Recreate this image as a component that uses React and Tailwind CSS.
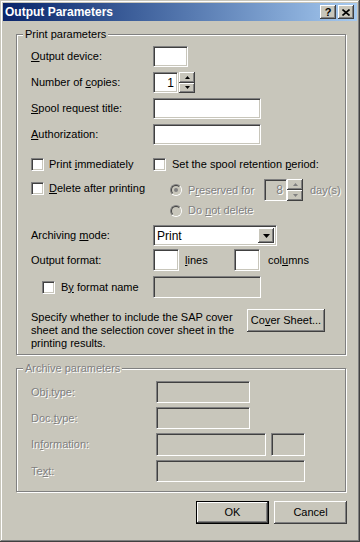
const sunken =
  "border border-[#808080] border-b-white border-r-white shadow-[inset_1px_1px_0_#404040,inset_-1px_-1px_0_#c8c6bb]";
const raised =
  "bg-[#c8c6bb] shadow-[inset_-1px_-1px_0_#404040,inset_1px_1px_0_#ffffff,inset_-2px_-2px_0_#808080,inset_2px_2px_0_#c8c6bb]";
const dis = "text-[#808080] [text-shadow:1px_1px_0_#ffffff]";

function U({ children }) {
  return <span className="underline underline-offset-[1px]">{children}</span>;
}

function Check() {
  return <div className={`w-[13px] h-[13px] shrink-0 bg-white ${sunken}`} />;
}

function Radio({ checked }) {
  return (
    <div className="w-[12px] h-[12px] shrink-0 rounded-full border border-[#808080] border-b-white border-r-white">
      <div className="w-full h-full rounded-full border border-[#404040] border-b-[#c8c6bb] border-r-[#c8c6bb] bg-[#c8c6bb] flex items-center justify-center">
        {checked && <div className="w-[4px] h-[4px] rounded-full bg-[#808080]" />}
      </div>
    </div>
  );
}

function Arrow({ up, color = "#000" }) {
  return (
    <svg width="5" height="3" viewBox="0 0 5 3" className="block">
      <path d={up ? "M2.5 0 L5 3 L0 3 Z" : "M0 0 L5 0 L2.5 3 Z"} fill={color} />
    </svg>
  );
}

function Spin({ disabled }) {
  const c = disabled ? "#808080" : "#000";
  return (
    <div className="flex flex-col w-[16px] h-full">
      <div className={`flex-1 flex items-center justify-center ${raised}`}>
        <Arrow up color={c} />
      </div>
      <div className={`flex-1 flex items-center justify-center ${raised}`}>
        <Arrow color={c} />
      </div>
    </div>
  );
}

function Group({ title, disabled, className = "", children }) {
  return (
    <div className={`relative border border-[#808080] shadow-[inset_1px_1px_0_#ffffff,1px_1px_0_#ffffff] ${className}`}>
      <span className={`absolute -top-[8px] left-[6px] px-[2px] bg-[#c8c6bb] leading-[14px] ${disabled ? dis : ""}`}>
        {title}
      </span>
      {children}
    </div>
  );
}

function Btn({ children, def, className = "" }) {
  return (
    <div className={`${def ? "border border-black" : ""} ${className}`}>
      <div className={`h-full flex items-center justify-center ${raised}`}>{children}</div>
    </div>
  );
}

export default function App() {
  return (
    <div className="w-[360px] h-[542px] bg-[#c8c6bb] p-[3px] text-[11px] text-black [font-family:'Liberation_Sans',Arial,sans-serif] shadow-[inset_-1px_-1px_0_#404040,inset_1px_1px_0_#c8c6bb,inset_-2px_-2px_0_#808080,inset_2px_2px_0_#ffffff]">
      {/* title bar */}
      <div className="h-[18px] flex items-center pl-[2px] pr-[3px] bg-linear-to-r from-[#0a246a] to-[#a6caf0]">
        <span className="text-white font-bold text-[12px] leading-none">Output Parameters</span>
        <div className="ml-auto flex gap-[2px]">
          <div className={`w-[16px] h-[14px] flex items-center justify-center ${raised}`}>
            <span className="font-bold text-[11px] leading-none">?</span>
          </div>
          <div className={`w-[16px] h-[14px] flex items-center justify-center ${raised}`}>
            <svg width="8" height="7" viewBox="0 0 8 7">
              <path d="M0.5 0.5 L7.5 6.5 M7.5 0.5 L0.5 6.5" stroke="#000" strokeWidth="1.6" />
            </svg>
          </div>
        </div>
      </div>

      <div className="pl-[13px] pr-[11px]">
        {/* Print parameters */}
        <Group title="Print parameters" className="mt-[13px] pl-[14px] pt-[11px] pb-[4px]">
          <div className="flex flex-col gap-[5px]">
            <div className="flex items-center h-[21px]">
              <div className="w-[122px]"><U>O</U>utput device:</div>
              <div className={`w-[35px] h-full bg-white ${sunken}`} />
            </div>
            <div className="flex items-center h-[21px]">
              <div className="w-[122px]">Number of <U>c</U>opies:</div>
              <div className={`w-[25px] h-full bg-white ${sunken} flex items-center justify-end pr-[3px] text-[12px]`}>1</div>
              <div className="ml-[1px] h-full"><Spin /></div>
            </div>
            <div className="flex items-center h-[21px]">
              <div className="w-[122px]"><U>S</U>pool request title:</div>
              <div className={`w-[108px] h-full bg-white ${sunken}`} />
            </div>
            <div className="flex items-center h-[21px]">
              <div className="w-[122px]"><U>A</U>uthorization:</div>
              <div className={`w-[108px] h-full bg-white ${sunken}`} />
            </div>
          </div>

          <div className="flex mt-[13px]">
            <div className="w-[122px] flex flex-col">
              <div className="flex items-center h-[13px]">
                <Check />
                <span className="ml-[5px]">Print <U>i</U>mmediately</span>
              </div>
              <div className="flex items-center h-[13px] mt-[11px]">
                <Check />
                <span className="ml-[5px]"><U>D</U>elete after printing</span>
              </div>
            </div>
            <div className="flex flex-col">
              <div className="flex items-center h-[13px]">
                <Check />
                <span className="ml-[6px]">Set the spool retention <U>p</U>eriod:</span>
              </div>
              <div className="flex items-center h-[22px] mt-[8px]">
                <div className="w-[111px] flex items-center pl-[17px]">
                  <Radio checked />
                  <span className={`ml-[6px] ${dis}`}>P<U>r</U>eserved for</span>
                </div>
                <div className="flex h-full">
                  <div className={`w-[23px] h-full bg-[#c8c6bb] ${sunken} flex items-center justify-end pr-[3px] text-[12px] ${dis}`}>8</div>
                  <Spin disabled />
                </div>
                <span className={`ml-[7px] ${dis}`}>day(s)</span>
              </div>
              <div className="flex items-center h-[13px] mt-[3px] pl-[17px]">
                <Radio />
                <span className={`ml-[6px] ${dis}`}>Do <U>n</U>ot delete</span>
              </div>
            </div>
          </div>

          <div className="flex items-center h-[21px] mt-[8px]">
            <div className="w-[122px]">Archiving <U>m</U>ode:</div>
            <div className={`w-[124px] h-full bg-white ${sunken} flex items-center p-[2px]`}>
              <span className="pl-[1px] text-[12px]">Print</span>
              <div className={`ml-auto w-[16px] h-full flex items-center justify-center ${raised}`}>
                <svg width="7" height="4" viewBox="0 0 7 4"><path d="M0 0 L7 0 L3.5 4 Z" fill="#000" /></svg>
              </div>
            </div>
          </div>

          <div className="flex items-center h-[22px] mt-[3px]">
            <div className="w-[122px]">Output format:</div>
            <div className={`w-[26px] h-full bg-white ${sunken}`} />
            <span className="ml-[6px] w-[49px]"><U>l</U>ines</span>
            <div className={`w-[26px] h-full bg-white ${sunken}`} />
            <span className="ml-[8px]">col<U>u</U>mns</span>
          </div>

          <div className="flex items-center h-[22px] mt-[5px]">
            <div className="w-[122px] flex items-center pl-[11px]">
              <Check />
              <span className="ml-[6px]">B<U>y</U> format name</span>
            </div>
            <div className={`w-[108px] h-full bg-[#c8c6bb] ${sunken}`} />
          </div>

          <div className="flex items-start mt-[11px]">
            <div className="w-[216px] pt-[2px] leading-[13px] whitespace-nowrap">
              Specify whether to include the SAP cover
              <br />
              sheet and the selection cover sheet in the
              <br />
              printing results.
            </div>
            <Btn className="w-[78px] h-[23px]">
              Co<U>v</U>er Sheet...
            </Btn>
          </div>
        </Group>

        {/* Archive parameters */}
        <Group title="Archive parameters" disabled className="mt-[13px] pl-[14px] pt-[12px] pb-[9px]">
          <div className="flex items-center h-[22px]">
            <div className={`w-[125px] ${dis}`}>Ob<U>j</U>.type:</div>
            <div className={`w-[94px] h-full bg-[#c8c6bb] ${sunken}`} />
          </div>
          <div className="flex items-center h-[22px] mt-[4px]">
            <div className={`w-[125px] ${dis}`}>Doc.<U>t</U>ype:</div>
            <div className={`w-[94px] h-full bg-[#c8c6bb] ${sunken}`} />
          </div>
          <div className="flex items-center h-[23px] mt-[4px]">
            <div className={`w-[125px] ${dis}`}>In<U>f</U>ormation:</div>
            <div className={`w-[110px] h-full bg-[#c8c6bb] ${sunken}`} />
            <div className={`ml-[5px] w-[34px] h-full bg-[#c8c6bb] ${sunken}`} />
          </div>
          <div className="flex items-center h-[22px] mt-[4px]">
            <div className={`w-[125px] ${dis}`}>Te<U>x</U>t:</div>
            <div className={`w-[149px] h-full bg-[#c8c6bb] ${sunken}`} />
          </div>
        </Group>

        <div className="flex justify-end gap-[5px] mt-[9px] -mr-[1px]">
          <Btn def className="w-[73px] h-[23px]">OK</Btn>
          <Btn className="w-[73px] h-[23px]">Cancel</Btn>
        </div>
      </div>
    </div>
  );
}
